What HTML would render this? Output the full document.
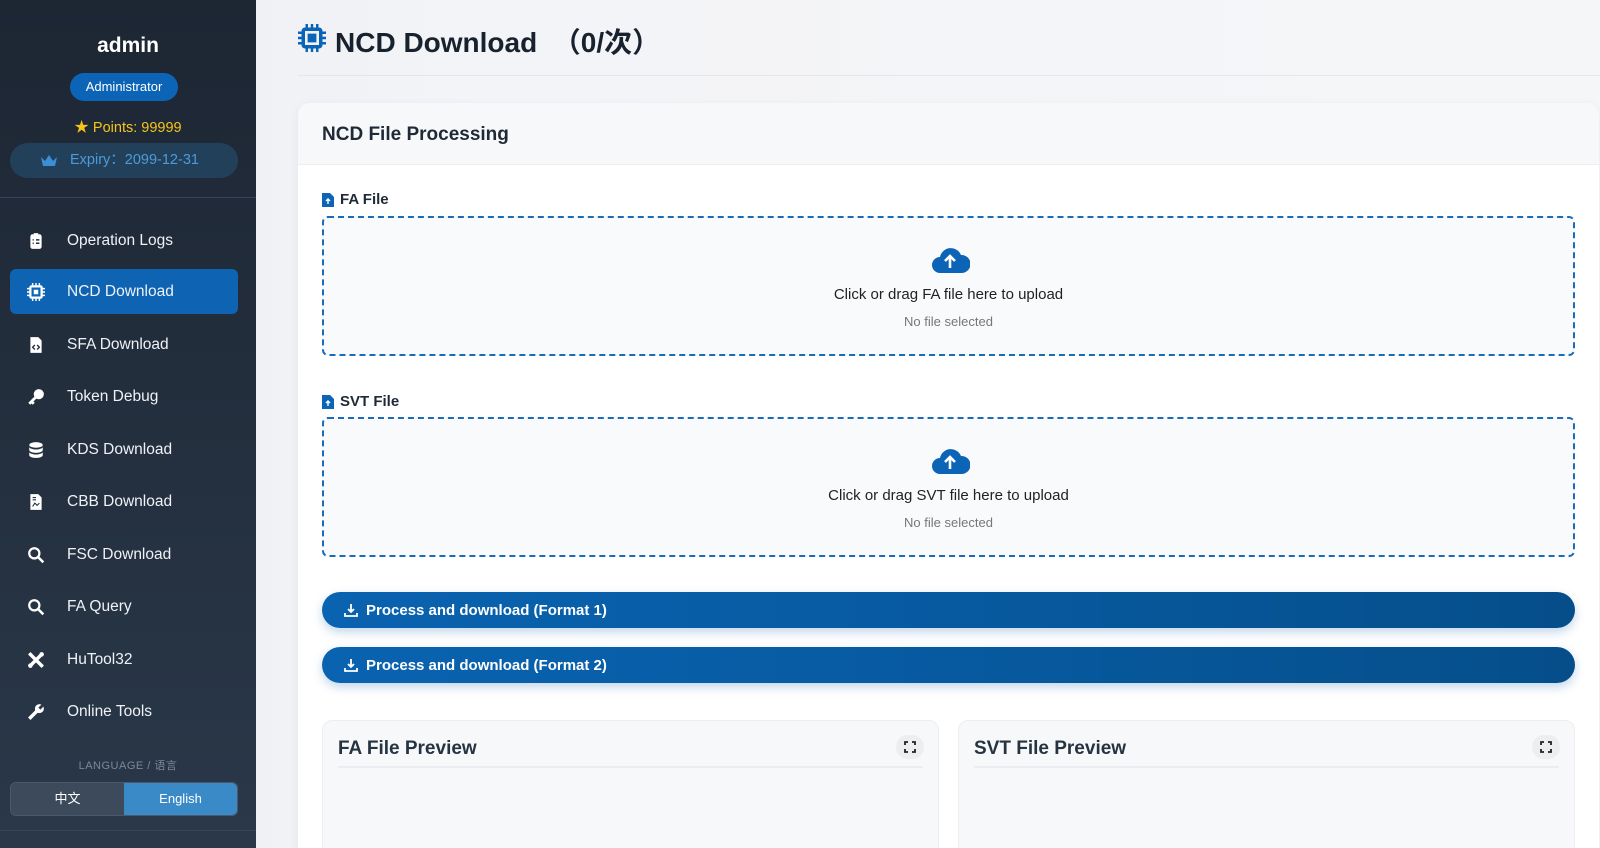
<!DOCTYPE html>
<html><head><meta charset="utf-8"><style>
*{box-sizing:border-box;margin:0;padding:0}
html{width:1600px;height:848px;overflow:hidden}
body{width:1600px;height:848px;overflow:hidden;font-family:"Liberation Sans","Noto Sans CJK SC",sans-serif;background:linear-gradient(90deg,#eceef2,#f3f4f7 30%,#f5f6f8);position:relative}
.sb{position:absolute;left:0;top:0;width:256px;height:848px;background:linear-gradient(180deg,#1d2633,#2a3849);color:#fff}
.c{position:absolute;left:0;width:256px;text-align:center}
.pill{position:absolute;border-radius:20px}
.mi{position:absolute;left:10px;width:228px;height:45px;border-radius:6px;display:flex;align-items:center;font-size:15.5px;color:#eef2f6}
.mi svg{position:absolute;left:17px;width:18px;height:18px}
.mi span{position:absolute;left:57px}
.act{background:#0e63b3}
.main{position:absolute;left:256px;top:0;width:1344px;height:848px;overflow:hidden}
.card{position:absolute;left:42px;top:103px;width:1301px;height:760px;background:#fff;border-radius:12px;box-shadow:0 2px 10px rgba(0,0,0,.05)}
.ch{height:62px;background:#f7f8fa;border-bottom:1px solid #eceef1;border-radius:12px 12px 0 0;font-weight:bold;font-size:19px;color:#1f2a36;padding:21px 24px}
.lbl{position:absolute;left:24px;font-weight:bold;font-size:15px;color:#1f2a36;display:flex;align-items:center;gap:6px}
.dz{position:absolute;left:24px;width:1253px;height:140px;border:2px dashed #1a6cbb;border-radius:6px;background:#f8fafc;text-align:center}
.dz .t{position:absolute;top:68px;width:100%;font-size:15px;color:#222}
.dz .s{position:absolute;top:96px;width:100%;font-size:13px;color:#777}
.dz svg{position:absolute;top:28px;left:606px}
.btn{position:absolute;left:24px;width:1253px;height:36px;border-radius:18px;background:linear-gradient(90deg,#0a63b0,#075aa0 50%,#054e8a);box-shadow:0 4px 10px rgba(10,90,170,.25);color:#fff;font-weight:bold;font-size:15px;display:flex;align-items:center;padding-left:44px}
.btn svg{position:absolute;left:22px}
.pv{position:absolute;top:617px;width:617px;height:160px;background:#f7f8fa;border:1px solid #eceef1;border-radius:10px}
.pv .h{position:absolute;left:15px;right:15px;top:0;height:47px;border-bottom:2px solid #ebedf0;font-weight:bold;font-size:19px;color:#263442;padding-top:17px}
.pv .f{position:absolute;right:14px;top:14px;width:28px;height:24px;border-radius:12px;background:#eceef0}
</style></head><body>
<div class="sb">
<div class="c" style="top:34px;font-size:21px;font-weight:bold">admin</div>
<div class="pill" style="left:70px;top:73px;width:108px;height:28px;background:#0b64b5;font-size:13px;text-align:center;line-height:28px">Administrator</div>
<div class="c" style="top:116px;font-size:14.5px;color:#f5c518">★ Points: 99999</div>
<div class="pill" style="left:10px;top:143px;width:228px;height:35px;background:#23405a;font-size:14.5px;color:#4e9ad8;line-height:35px;padding-left:30px">
<svg width="18" height="14" viewBox="0 0 18 14" style="position:absolute;left:30px;top:11px"><path d="M1 3l4 4 4-6 4 6 4-4-2 9H3z" fill="#3d8fd4"/></svg><span style="margin-left:30px">Expiry：2099-12-31</span></div>
<div style="position:absolute;top:197px;left:0;width:256px;height:1px;background:#344356"></div>
<div class="mi" style="top:218px"><svg viewBox="0 0 16 16"><rect x="3" y="2" width="10" height="13" rx="2" fill="#fff"/><rect x="6" y="1" width="4" height="3" fill="#fff"/><path d="M5 7h1M8 7h3M5 10h1M8 10h3" stroke="#243040" stroke-width="1.3"/></svg><span>Operation Logs</span></div>
<div class="mi act" style="top:269px"><svg viewBox="0 0 16 16"><rect x="3" y="3" width="10" height="10" rx="1" fill="none" stroke="#fff" stroke-width="2"/><rect x="6" y="6" width="4" height="4" fill="#fff"/><path d="M5 0v3M8 0v3M11 0v3M5 13v3M8 13v3M11 13v3M0 5h3M0 8h3M0 11h3M13 5h3M13 8h3M13 11h3" stroke="#fff" stroke-width="1.3"/></svg><span>NCD Download</span></div>
<div class="mi" style="top:322px"><svg viewBox="0 0 16 16"><path d="M3 1h7l3 3v11H3z" fill="#fff"/><path d="M7 8l-2 2 2 2M9 8l2 2-2 2" stroke="#243040" stroke-width="1.2" fill="none"/></svg><span>SFA Download</span></div>
<div class="mi" style="top:374px"><svg viewBox="0 0 16 16"><circle cx="10.5" cy="5.5" r="4.5" fill="#fff"/><path d="M8 8l-6 6M4 12l2 2" stroke="#fff" stroke-width="2.5"/></svg><span>Token Debug</span></div>
<div class="mi" style="top:427px"><svg viewBox="0 0 16 16"><ellipse cx="8" cy="3.5" rx="6" ry="2.5" fill="#fff"/><path d="M2 5.5v2.5c0 1.4 2.7 2.5 6 2.5s6-1.1 6-2.5V5.5c-1 1.3-3.3 2-6 2s-5-.7-6-2zM2 10v2.5C2 13.9 4.7 15 8 15s6-1.1 6-2.5V10c-1 1.3-3.3 2-6 2s-5-.7-6-2z" fill="#fff"/></svg><span>KDS Download</span></div>
<div class="mi" style="top:479px"><svg viewBox="0 0 16 16"><path d="M3 1h7l3 3v11H3z" fill="#fff"/><path d="M5 12l2-3 2 2 2-2" stroke="#243040" stroke-width="1" fill="none"/><path d="M5 4h3M5 6h3" stroke="#243040"/></svg><span>CBB Download</span></div>
<div class="mi" style="top:532px"><svg viewBox="0 0 16 16"><circle cx="6.5" cy="6.5" r="4.5" fill="none" stroke="#fff" stroke-width="2"/><path d="M10 10l4.5 4.5" stroke="#fff" stroke-width="2.2"/></svg><span>FSC Download</span></div>
<div class="mi" style="top:584px"><svg viewBox="0 0 16 16"><circle cx="6.5" cy="6.5" r="4.5" fill="none" stroke="#fff" stroke-width="2"/><path d="M10 10l4.5 4.5" stroke="#fff" stroke-width="2.2"/></svg><span>FA Query</span></div>
<div class="mi" style="top:637px"><svg viewBox="0 0 16 16"><path d="M2 2l12 12M14 2L2 14" stroke="#fff" stroke-width="3"/><circle cx="3" cy="13" r="2" fill="#fff"/><circle cx="13" cy="3" r="2" fill="#fff"/></svg><span>HuTool32</span></div>
<div class="mi" style="top:689px"><svg viewBox="0 0 16 16"><path d="M2 14l7-7" stroke="#fff" stroke-width="3"/><circle cx="11" cy="5" r="4" fill="#fff"/><path d="M11 5l3-3" stroke="#2a3849" stroke-width="2.5"/></svg><span>Online Tools</span></div>
<div class="c" style="top:757px;font-size:11px;color:#7c8896;letter-spacing:.5px">LANGUAGE / 语言</div>
<div style="position:absolute;left:10px;top:782px;width:228px;height:34px;border:1px solid #4a5a6c;border-radius:6px;overflow:hidden;display:flex;font-size:13px">
<div style="width:50%;background:#3c4a5b;text-align:center;line-height:32px">中文</div>
<div style="width:50%;background:#3a8ac8;text-align:center;line-height:32px">English</div></div>
<div style="position:absolute;top:830px;left:0;width:256px;height:1px;background:#344356"></div>
</div>
<div class="main">
<svg width="28" height="28" viewBox="0 0 16 16" style="position:absolute;left:42px;top:24px"><rect x="3" y="3" width="10" height="10" rx="1" fill="none" stroke="#0b64b5" stroke-width="2"/><rect x="5.5" y="5.5" width="5" height="5" fill="#0b64b5"/><path d="M5 0v3M8 0v3M11 0v3M5 13v3M8 13v3M11 13v3M0 5h3M0 8h3M0 11h3M13 5h3M13 8h3M13 11h3" stroke="#0b64b5" stroke-width="1.4"/></svg>
<div style="position:absolute;left:79px;top:21px;font-size:28px;font-weight:bold;color:#18222e">NCD Download &nbsp;（0/次）</div>
<div style="position:absolute;left:42px;top:75px;right:0;height:1px;background:#e4e6ea"></div>
<div class="card">
<div class="ch">NCD File Processing</div>
<div class="lbl" style="top:88px"><svg width="12" height="15" viewBox="0 0 12 15"><path d="M0 1h8l4 4v10H0z" fill="#0b64b5"/><path d="M6 12V7M4 9l2-2 2 2" stroke="#fff" stroke-width="1.4" fill="none"/></svg>FA File</div>
<div class="dz" style="top:113px"><svg width="40" height="28" viewBox="0 0 40 28"><path d="M10 27a8 8 0 010-16 11 11 0 0121-2 8.5 8.5 0 011 18z" fill="#0b64b5"/><path d="M20 22V11M15 15l5-5 5 5" stroke="#fff" stroke-width="2.6" fill="none"/></svg><div class="t">Click or drag FA file here to upload</div><div class="s">No file selected</div></div>
<div class="lbl" style="top:290px"><svg width="12" height="15" viewBox="0 0 12 15"><path d="M0 1h8l4 4v10H0z" fill="#0b64b5"/><path d="M6 12V7M4 9l2-2 2 2" stroke="#fff" stroke-width="1.4" fill="none"/></svg>SVT File</div>
<div class="dz" style="top:314px"><svg width="40" height="28" viewBox="0 0 40 28"><path d="M10 27a8 8 0 010-16 11 11 0 0121-2 8.5 8.5 0 011 18z" fill="#0b64b5"/><path d="M20 22V11M15 15l5-5 5 5" stroke="#fff" stroke-width="2.6" fill="none"/></svg><div class="t">Click or drag SVT file here to upload</div><div class="s">No file selected</div></div>
<div class="btn" style="top:489px"><svg width="14" height="14" viewBox="0 0 14 14"><path d="M7 1v8M4 6l3 3 3-3M1 10v3h12v-3" stroke="#fff" stroke-width="1.8" fill="none"/></svg>Process and download (Format 1)</div>
<div class="btn" style="top:544px"><svg width="14" height="14" viewBox="0 0 14 14"><path d="M7 1v8M4 6l3 3 3-3M1 10v3h12v-3" stroke="#fff" stroke-width="1.8" fill="none"/></svg>Process and download (Format 2)</div>
<div class="pv" style="left:24px"><div class="h">FA File Preview</div><div class="f"><svg width="28" height="24" viewBox="0 0 28 24"><path d="M9 10V7h3M16 7h3v3M19 14v3h-3M12 17H9v-3" stroke="#222" stroke-width="1.8" fill="none"/></svg></div></div>
<div class="pv" style="left:660px"><div class="h">SVT File Preview</div><div class="f"><svg width="28" height="24" viewBox="0 0 28 24"><path d="M9 10V7h3M16 7h3v3M19 14v3h-3M12 17H9v-3" stroke="#222" stroke-width="1.8" fill="none"/></svg></div></div>
</div>
</div>
</body></html>
